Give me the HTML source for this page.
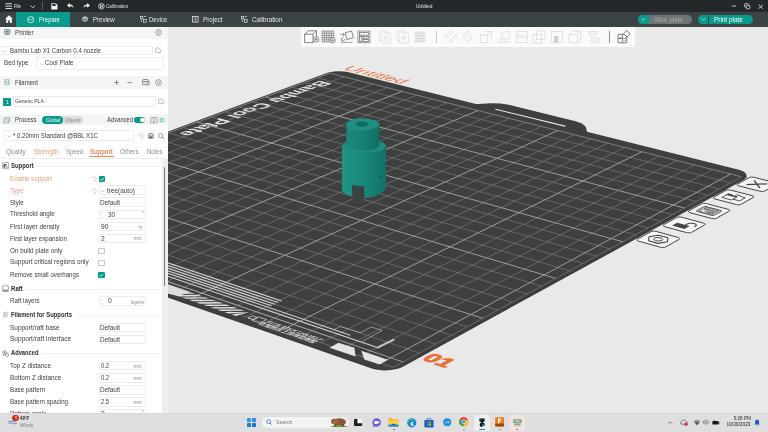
<!DOCTYPE html>
<html><head><meta charset="utf-8"><title>Untitled</title>
<style>
html,body{margin:0;padding:0;background:#e9e9e9;}
body{width:768px;height:432px;position:relative;overflow:hidden;font-family:"Liberation Sans",sans-serif;}
.a{position:absolute;box-sizing:border-box;}
.t{white-space:nowrap;}
svg{overflow:visible;}
</style></head><body>
<svg class="a" style="left:0;top:0" width="768" height="432" viewBox="0 0 768 432">
<defs><filter id="nolcd" x="-5%" y="-50%" width="110%" height="200%"><feOffset dx="0" dy="0"/></filter><linearGradient id="cyl" x1="0" x2="1" y1="0" y2="0"><stop offset="0" stop-color="#1f9585"/><stop offset="0.45" stop-color="#1a897b"/><stop offset="1" stop-color="#147166"/></linearGradient></defs>
<rect x="0" y="0" width="768" height="432" fill="#e9e9e9"/>
<polygon points="469.94,104.46 478.13,104.12 490.99,103.36 500.71,103.41 508.64,104.74 575.56,121.29 581.98,123.53 585.94,126.94 586.80,131.24 588.33,134.10" fill="#3e3f3f" stroke="none" stroke-width="0" />
<polygon points="-46.65,210.99 -49.37,212.17 -51.50,213.47 -52.98,214.84 -53.73,216.24 -53.72,217.61 -52.96,218.89 -51.46,220.03 -49.29,221.00 371.74,367.08 375.37,368.10 379.43,368.77 383.76,369.08 388.18,369.01 392.51,368.56 396.60,367.75 400.27,366.62 403.38,365.21 743.95,178.38 745.47,177.31 746.32,176.13 746.49,174.89 745.96,173.63 744.76,172.42 742.93,171.28 740.56,170.27 737.72,169.42 348.64,72.26 346.10,71.75 343.25,71.41 340.21,71.25 337.10,71.27 334.02,71.49 331.11,71.88 328.46,72.44 326.18,73.14" fill="#3a3b3b" stroke="none" stroke-width="0" transform="translate(0,1.3)"/>
<polygon points="-46.65,210.99 -49.37,212.17 -51.50,213.47 -52.98,214.84 -53.73,216.24 -53.72,217.61 -52.96,218.89 -51.46,220.03 -49.29,221.00 371.74,367.08 375.37,368.10 379.43,368.77 383.76,369.08 388.18,369.01 392.51,368.56 396.60,367.75 400.27,366.62 403.38,365.21 743.95,178.38 745.47,177.31 746.32,176.13 746.49,174.89 745.96,173.63 744.76,172.42 742.93,171.28 740.56,170.27 737.72,169.42 348.64,72.26 346.10,71.75 343.25,71.41 340.21,71.25 337.10,71.27 334.02,71.49 331.11,71.88 328.46,72.44 326.18,73.14" fill="#3e3f3f" stroke="none" stroke-width="0" />
<polygon points="-49.54,213.69 -50.24,214.09 -50.35,214.52 -49.85,214.87 390.81,366.73 392.06,366.96 393.42,366.88 394.53,366.51 740.47,177.42 740.78,177.06 740.51,176.67 739.74,176.36 331.13,73.54 330.26,73.42 329.29,73.46 328.49,73.64" fill="none" stroke="#858686" stroke-width="0.6" />
<path d="M329.72,73.18L741.57,176.82M329.72,73.18L-51.33,214.36M317.28,77.79L730.50,182.87M343.90,76.75L-36.47,219.48M304.67,82.47L719.26,189.02M358.21,80.35L-21.43,224.66M291.89,87.20L707.84,195.26M372.66,83.99L-6.22,229.90M278.93,92.00L696.25,201.59M387.25,87.66L9.18,235.21M252.49,101.80L672.51,214.57M416.87,95.11L40.52,246.01M238.99,106.80L660.36,221.21M431.90,98.90L56.48,251.51M225.30,111.87L648.01,227.96M447.09,102.72L72.63,257.08M211.42,117.01L635.47,234.82M462.42,106.57L88.97,262.71M183.06,127.52L609.75,248.87M493.56,114.41L122.28,274.19M168.58,132.88L596.57,256.08M509.36,118.39L139.24,280.03M153.89,138.33L583.17,263.40M525.33,122.41L156.41,285.95M138.98,143.85L569.55,270.85M541.47,126.47L173.80,291.94M108.50,155.14L541.60,286.13M574.24,134.71L209.25,304.16M92.92,160.91L527.26,293.97M590.89,138.90L227.32,310.39M77.11,166.77L512.67,301.94M607.71,143.13L245.62,316.70M61.05,172.72L497.82,310.06M624.70,147.41L264.16,323.08M28.20,184.89L467.32,326.73M659.25,156.10L301.97,336.12M11.39,191.12L451.66,335.29M676.80,160.52L321.26,342.76M-5.68,197.44L435.71,344.01M694.54,164.98L340.80,349.50M-23.01,203.87L419.47,352.88M712.47,169.50L360.60,356.32" stroke="#818282" stroke-width="0.6" fill="none"/>
<path d="M265.80,96.87L684.48,208.03M401.99,91.37L24.76,240.58M197.34,122.23L622.71,241.79M477.91,110.47L105.52,268.41M123.85,149.45L555.69,278.42M557.77,130.57L191.42,298.01M44.75,178.76L482.71,318.32M641.88,151.73L282.94,329.56M-40.63,210.39L402.92,361.93M730.60,174.06L380.67,363.24" stroke="#a6a7a7" stroke-width="0.9" fill="none"/>
<path d="M495.59,109.28L564.98,126.12" stroke="#e4e4e4" stroke-width="1.1" fill="none" stroke-linecap="round"/>
<path d="M75.56,231.96L281.58,300.95" stroke="#d2d2d2" stroke-width="1.15" fill="none" stroke-linecap="butt"/>
<path d="M72.11,233.35L278.22,302.56" stroke="#d2d2d2" stroke-width="1.15" fill="none" stroke-linecap="butt"/>
<path d="M68.65,234.73L274.85,304.18" stroke="#d2d2d2" stroke-width="1.15" fill="none" stroke-linecap="butt"/>
<path d="M65.17,236.13L271.47,305.80" stroke="#d2d2d2" stroke-width="1.15" fill="none" stroke-linecap="butt"/>
<path d="M61.86,237.46L350.49,335.20" stroke="#d2d2d2" stroke-width="1.1" fill="none" stroke-linecap="butt"/>
<path d="M58.01,239.00L377.28,347.46" stroke="#d2d2d2" stroke-width="1.1" fill="none" stroke-linecap="butt"/>
<path d="M51.51,241.61L331.82,337.35" stroke="#a8a8a8" stroke-width="0.45" fill="none" stroke-linecap="butt"/>
<path d="M377.01,347.95L394.36,339.43" stroke="#c6c6c6" stroke-width="2.0" fill="none" stroke-linecap="butt"/>
<polyline points="333.21,330.06 340.24,326.48 360.24,332.65 371.14,327.01 382.38,330.48 362.28,341.50" fill="none" stroke="#c4c4c4" stroke-width="0.6" />
<polygon points="112.93,265.27 190.45,292.10 177.84,296.00 168.35,293.70 100.91,270.37" fill="#dcdcdc" stroke="none" stroke-width="0" />
<polygon points="168.01,292.60 172.04,293.99 195.04,293.81 190.98,292.42" fill="#e0e0e0" stroke="none" stroke-width="0" />
<polygon points="174.94,294.99 178.98,296.39 202.03,296.21 197.96,294.81" fill="#e0e0e0" stroke="none" stroke-width="0" />
<polygon points="181.89,297.40 185.96,298.80 209.07,298.62 204.97,297.22" fill="#e0e0e0" stroke="none" stroke-width="0" />
<polygon points="188.88,299.81 192.97,301.23 216.13,301.04 212.01,299.63" fill="#e0e0e0" stroke="none" stroke-width="0" />
<polygon points="195.91,302.24 200.02,303.66 223.23,303.48 219.09,302.06" fill="#e0e0e0" stroke="none" stroke-width="0" />
<polygon points="202.97,304.68 207.10,306.11 230.37,305.92 226.21,304.50" fill="#e0e0e0" stroke="none" stroke-width="0" />
<polygon points="210.07,307.13 214.22,308.57 237.55,308.38 233.36,306.95" fill="#e0e0e0" stroke="none" stroke-width="0" />
<polygon points="217.20,309.60 221.37,311.04 244.76,310.85 240.55,309.41" fill="#e0e0e0" stroke="none" stroke-width="0" />
<polygon points="224.37,312.08 228.56,313.53 248.70,312.20 247.78,311.89" fill="#e0e0e0" stroke="none" stroke-width="0" />
<polygon points="231.58,314.57 235.79,316.02 248.70,312.20 248.70,312.20" fill="#e0e0e0" stroke="none" stroke-width="0" />
<polygon points="258.75,316.93 266.73,319.67 259.82,323.03 251.83,320.27" fill="none" stroke="#e0e0e0" stroke-width="0.7" stroke-linejoin="round"/>
<polygon points="252.56,315.80 257.54,317.51 253.04,319.68 248.05,317.96" fill="none" stroke="#e0e0e0" stroke-width="0.7" stroke-linejoin="round"/>
<polygon points="329.57,347.70 338.37,342.64 354.41,347.84 355.60,356.53" fill="#e4e4e4" stroke="none" stroke-width="0" />
<polygon points="361.25,350.77 387.82,359.73 379.62,364.53 364.38,359.57" fill="#e4e4e4" stroke="none" stroke-width="0" />
<text filter="url(#nolcd)" transform="matrix(1.8666,0.6424,-1.7293,0.8429,266.09,322.45)" x="0" y="0" text-anchor="start" font-family="'Liberation Sans',sans-serif" font-size="3.1" font-weight="700" fill="#e8e8e8" stroke="#e8e8e8" stroke-width="0" textLength="29" lengthAdjust="spacingAndGlyphs">GLUE STICK CAN HELP</text>
<text filter="url(#nolcd)" transform="matrix(1.8642,0.6443,-1.7389,0.8453,258.25,323.79)" x="0" y="0" text-anchor="start" font-family="'Noto Sans CJK SC',sans-serif" font-size="2.8" font-weight="700" fill="#e8e8e8" stroke="#e8e8e8" stroke-width="0" textLength="30" lengthAdjust="spacingAndGlyphs">在加热床上涂抹固体胶</text>
<text filter="url(#nolcd)" transform="matrix(-1.2893,0.4826,-1.4323,-0.3732,320.87,80.28)" x="0" y="0" text-anchor="start" font-family="'Liberation Sans',sans-serif" font-size="10.6" font-weight="700" fill="#e2e2e2" stroke="#e2e2e2" stroke-width="0" textLength="41.5" lengthAdjust="spacingAndGlyphs">Bambu</text>
<text filter="url(#nolcd)" transform="matrix(-1.3586,0.5085,-1.4448,-0.3926,261.99,102.21)" x="0" y="0" text-anchor="start" font-family="'Liberation Sans',sans-serif" font-size="10.6" font-weight="700" fill="#e2e2e2" stroke="#e2e2e2" stroke-width="0" textLength="26.5" lengthAdjust="spacingAndGlyphs">Cool</text>
<text filter="url(#nolcd)" transform="matrix(-1.4219,0.5322,-1.4548,-0.4104,220.41,117.70)" x="0" y="0" text-anchor="start" font-family="'Liberation Sans',sans-serif" font-size="10.6" font-weight="700" fill="#e2e2e2" stroke="#e2e2e2" stroke-width="0" textLength="30.0" lengthAdjust="spacingAndGlyphs">Plate</text>
<text filter="url(#nolcd)" transform="matrix(1.4354,0.3567,-1.2097,0.4604,341.87,69.21)" x="0" y="0" text-anchor="start" font-family="'Liberation Sans',sans-serif" font-size="11.0" font-weight="400" fill="#ea7444" stroke="#ea7444" stroke-width="0" textLength="41.5" lengthAdjust="spacingAndGlyphs">Untitled</text>
<text filter="url(#nolcd)" transform="matrix(2.0533,0.6915,-1.6321,0.9089,420.53,359.51)" x="0" y="0" text-anchor="start" font-family="'Liberation Sans',sans-serif" font-size="10.9" font-weight="700" fill="#ea6c36" stroke="#ea6c36" stroke-width="0.55" textLength="12.2" lengthAdjust="spacingAndGlyphs">01</text>
<polygon points="775.06,182.60 776.12,182.97 776.76,183.44 776.87,183.92 776.45,184.36 764.66,191.02 763.75,191.34 762.50,191.49 761.10,191.45 759.77,191.22 738.75,185.87 737.71,185.49 737.09,185.02 737.00,184.54 737.45,184.10 749.36,177.55 750.26,177.24 751.49,177.09 752.87,177.14 754.18,177.36" fill="#f4f4f4" stroke="#454545" stroke-width="1.0" stroke-linejoin="round"/>
<path d="M754.10,180.50L759.83,187.99" stroke="#454545" stroke-width="1.3" fill="none" stroke-linecap="butt"/>
<path d="M767.27,183.82L746.62,184.64" stroke="#454545" stroke-width="1.3" fill="none" stroke-linecap="butt"/>
<polygon points="752.00,195.60 753.06,195.98 753.70,196.46 753.80,196.96 753.35,197.41 741.18,204.29 740.25,204.62 738.97,204.78 737.55,204.73 736.20,204.50 714.99,198.98 713.94,198.59 713.33,198.11 713.25,197.60 713.72,197.15 726.02,190.39 726.94,190.07 728.20,189.92 729.60,189.96 730.92,190.19" fill="#f4f4f4" stroke="#454545" stroke-width="1.0" stroke-linejoin="round"/>
<polyline points="727.43,194.32 721.74,197.47 731.52,200.01 737.19,196.84 732.30,195.58 732.34,194.76 728.45,193.76 727.43,194.32" fill="none" stroke="#454545" stroke-width="0.9" />
<polygon points="728.45,193.76 732.34,194.76 732.30,195.58 737.19,196.84 735.95,197.54 726.18,195.01" fill="#454545" stroke="none" stroke-width="0" />
<polyline points="735.27,195.52 736.63,194.76 740.34,195.72 740.62,196.53 745.33,197.74 739.68,200.91 733.00,199.18" fill="none" stroke="#454545" stroke-width="0.9" />
<polygon points="727.82,209.22 728.90,209.61 729.53,210.11 729.62,210.63 729.15,211.09 716.57,218.21 715.61,218.55 714.30,218.71 712.86,218.67 711.49,218.42 690.09,212.72 689.03,212.32 688.42,211.82 688.36,211.30 688.85,210.83 701.56,203.84 702.51,203.51 703.79,203.35 705.21,203.40 706.55,203.63" fill="#f4f4f4" stroke="#454545" stroke-width="1.0" stroke-linejoin="round"/>
<polygon points="720.95,210.47 721.59,210.80 721.44,211.17 713.97,215.37 713.12,215.56 712.07,215.45 697.03,211.46 696.41,211.12 696.56,210.75 704.08,206.60 704.92,206.41 705.96,206.52" fill="none" stroke="#454545" stroke-width="0.9" />
<polygon points="705.58,207.37 719.00,210.91 717.37,211.83 703.94,208.28" fill="none" stroke="#454545" stroke-width="0.7" />
<polygon points="702.88,208.87 707.61,210.12 703.74,212.27 699.00,211.02" fill="none" stroke="#454545" stroke-width="0.7" />
<polygon points="709.39,210.58 716.32,212.42 714.80,213.27 707.87,211.43" fill="none" stroke="#454545" stroke-width="0.7" />
<polygon points="706.93,211.96 713.86,213.79 712.45,214.58 705.52,212.74" fill="none" stroke="#454545" stroke-width="0.7" />
<polygon points="703.31,223.03 704.39,223.44 705.01,223.96 705.09,224.49 704.60,224.97 691.59,232.33 690.60,232.68 689.27,232.85 687.80,232.80 686.42,232.55 664.83,226.66 663.76,226.24 663.16,225.73 663.11,225.19 663.62,224.71 676.76,217.48 677.74,217.14 679.05,216.98 680.49,217.03 681.84,217.27" fill="#f4f4f4" stroke="#454545" stroke-width="1.0" stroke-linejoin="round"/>
<polygon points="677.19,222.77 689.54,226.11 684.45,228.96 672.08,225.60" fill="#454545" stroke="none" stroke-width="0" />
<polyline points="685.55,225.03 687.73,223.82 687.73,223.82 689.46,223.29 691.80,223.19 694.12,223.55 695.80,224.26 696.38,225.15 695.72,225.97 694.27,226.79" fill="none" stroke="#454545" stroke-width="1.1" />
<polygon points="677.84,237.39 678.92,237.81 679.54,238.34 679.60,238.90 679.09,239.39 665.63,247.00 664.61,247.37 663.26,247.54 661.76,247.49 660.37,247.23 638.57,241.14 637.50,240.71 636.90,240.18 636.87,239.62 637.40,239.13 651.00,231.65 652.00,231.30 653.34,231.13 654.80,231.18 656.17,231.43" fill="#f4f4f4" stroke="#454545" stroke-width="1.0" stroke-linejoin="round"/>
<polygon points="667.53,241.83 657.89,243.35 648.62,240.76 649.02,236.70 658.61,235.21 667.85,237.76" fill="none" stroke="#454545" stroke-width="1.1" stroke-linejoin="round"/>
<polygon points="662.08,240.32 661.03,240.71 659.65,240.93 658.10,240.94 656.57,240.75 655.24,240.39 654.28,239.88 653.79,239.30 653.85,238.72 654.43,238.20 655.48,237.81 656.86,237.60 658.40,237.59 659.93,237.77 661.25,238.14 662.22,238.64 662.71,239.22 662.66,239.80" fill="none" stroke="#454545" stroke-width="1.0" />
<path d="M342.0,146.0 L342.0,190.0 C343.0,195.0 356.0,198.3 366.0,198.0 C377.0,197.2 385.5,192.0 386.0,187.0 L386.0,146.0 A22.0,6.7 0 0 0 342.0,146.0 Z" fill="url(#cyl)"/>
<path d="M352.2,197.6 L352.2,185.0 Q358,186.6 364.2,186.6 L364.2,199.5 L352.2,199.5 Z" fill="#3e3f3f"/>
<path d="M352.2,185.0 Q358,186.6 364.2,186.6" stroke="#11625a" stroke-width="0.8" fill="none"/>
<ellipse cx="364.0" cy="146.0" rx="22.0" ry="6.7" fill="#1c8d7f"/>
<path d="M346.40000000000003,124.0 L346.40000000000003,145.5 A16.4,5.8 0 0 0 379.2,145.5 L379.2,124.0 Z" fill="url(#cyl)"/>
<path d="M346.40000000000003,126.6 A16.4,5.8 0 0 0 379.2,126.6M346.40000000000003,128.7 A16.4,5.8 0 0 0 379.2,128.7M346.40000000000003,130.8 A16.4,5.8 0 0 0 379.2,130.8M346.40000000000003,132.9 A16.4,5.8 0 0 0 379.2,132.9M346.40000000000003,135.0 A16.4,5.8 0 0 0 379.2,135.0M346.40000000000003,137.1 A16.4,5.8 0 0 0 379.2,137.1M346.40000000000003,139.2 A16.4,5.8 0 0 0 379.2,139.2M346.40000000000003,141.3 A16.4,5.8 0 0 0 379.2,141.3M346.40000000000003,143.4 A16.4,5.8 0 0 0 379.2,143.4" stroke="#12695f" stroke-width="0.7" fill="none" opacity="0.75"/>
<ellipse cx="362.8" cy="124.0" rx="16.4" ry="5.8" fill="#1d9081"/>
<ellipse cx="362.0" cy="124.2" rx="6.0" ry="2.8" fill="#136a60"/>
<circle cx="381" cy="176.4" r="1.4" fill="#0f5a52"/>
</svg>
<div class="a" style="left:0px;top:0px;width:768px;height:12px;background:#23282b;"></div>
<svg class="a" style="left:5px;top:3px" width="8" height="7" viewBox="0 0 8 7"><path d="M0.4,0.7H7M0.4,3.1H7M0.4,5.5H7" stroke="#f2f2f2" stroke-width="0.9"/></svg>
<div class="a t" style="left:13.9px;top:0.10px;line-height:12px;font-size:5.7px;color:#f4f4f4;font-weight:400;transform:scaleX(0.751);transform-origin:left center;">File</div>
<svg class="a" style="left:29.5px;top:4.8px" width="6" height="4" viewBox="0 0 6 4"><path d="M0.5,0.6L2.8,2.7L5.1,0.6" stroke="#f2f2f2" stroke-width="0.8" fill="none"/></svg>
<div class="a" style="left:42.2px;top:2px;width:0.6px;height:8.4px;background:#565d60;"></div>
<svg class="a" style="left:51.4px;top:2.6px" width="7" height="7" viewBox="0 0 7 7"><path d="M0.3,0.3H4.8L6.5,2V6.5H0.3Z" fill="#f2f2f2"/><rect x="1.3" y="0.9" width="3.4" height="2.0" fill="#23282b"/><rect x="1.1" y="4.1" width="4.6" height="1.4" fill="#23282b" opacity="0.0"/></svg>
<svg class="a" style="left:67px;top:3.4px" width="7" height="5.4" viewBox="0 0 7 5.4"><path d="M2.9,0L0,2.4L2.9,4.8V3.3C4.6,3.2 5.8,3.8 6.6,5.2C6.4,3 5.2,1.7 2.9,1.5Z" fill="#f2f2f2"/></svg>
<svg class="a" style="left:82.8px;top:3.4px" width="7" height="5.4" viewBox="0 0 7 5.4"><path d="M4.1,0L7,2.4L4.1,4.8V3.3C2.4,3.2 1.2,3.8 0.4,5.2C0.6,3 1.8,1.7 4.1,1.5Z" fill="#f2f2f2"/></svg>
<svg class="a" style="left:98px;top:2.8px" width="7" height="7" viewBox="0 0 7 7"><circle cx="3.4" cy="3.3" r="2.8" fill="none" stroke="#e8e8e8" stroke-width="0.8"/><path d="M2.5,1.6V5M4.3,1.6V5M2.5,3.3H4.3" stroke="#e8e8e8" stroke-width="0.8"/></svg>
<div class="a t" style="left:106.4px;top:0.10px;line-height:12px;font-size:5.6px;color:#e2e2e2;font-weight:400;transform:scaleX(0.833);transform-origin:left center;">Calibration</div>
<div class="a t" style="left:415.8px;top:0.10px;line-height:12px;font-size:5.5px;color:#e8e8e8;font-weight:400;transform:scaleX(0.879);transform-origin:left center;">Untitled</div>
<svg class="a" style="left:731px;top:4px" width="6" height="4" viewBox="0 0 6 4"><path d="M0.8,2H5" stroke="#e0e0e0" stroke-width="0.8"/></svg>
<svg class="a" style="left:743.5px;top:2.8px" width="7" height="7" viewBox="0 0 7 7"><rect x="0.6" y="0.6" width="3.6" height="3.6" rx="0.8" fill="none" stroke="#e0e0e0" stroke-width="0.8"/><rect x="2.2" y="2.2" width="3.6" height="3.6" rx="0.8" fill="#23282b" stroke="#e0e0e0" stroke-width="0.8"/></svg>
<svg class="a" style="left:757.5px;top:3.6px" width="6" height="6" viewBox="0 0 6 6"><path d="M0.7,0.7L4.7,4.7M4.7,0.7L0.7,4.7" stroke="#e8e8e8" stroke-width="0.9"/></svg>
<div class="a" style="left:0px;top:12px;width:768px;height:14.5px;background:#3b4346;"></div>
<div class="a" style="left:16.1px;top:12px;width:54.4px;height:14.5px;background:#0a9a8b;"></div>
<svg class="a" style="left:4.5px;top:15.2px" width="8" height="8.5" viewBox="0 0 8 8.5"><path d="M4,0.2L0.2,3.7H1.2V8H3.1V5.4H4.9V8H6.8V3.7H7.8Z" fill="#ffffff"/></svg>
<svg class="a" style="left:27px;top:16px" width="8" height="8" viewBox="0 0 8 8"><circle cx="3.7" cy="3.7" r="3.1" fill="none" stroke="#dff5f1" stroke-width="0.8"/><path d="M1,2.6L3.7,4.2L6.4,2.6" stroke="#dff5f1" stroke-width="0.7" fill="none"/></svg>
<div class="a t" style="left:38.9px;top:13.60px;line-height:12px;font-size:6.7px;color:#f0fbf9;font-weight:400;transform:scaleX(0.877);transform-origin:left center;">Prepare</div>
<svg class="a" style="left:82px;top:16.4px" width="7" height="7" viewBox="0 0 7 7"><path d="M3,0.3L5.7,1.6V4.6L3,6L0.3,4.6V1.6Z" fill="#c9cdce"/><path d="M1.2,2.6H4.8M1.2,3.6H4.8M1.2,4.5H4.8" stroke="#3b4346" stroke-width="0.45"/></svg>
<div class="a t" style="left:92.8px;top:13.60px;line-height:12px;font-size:6.7px;color:#e4e6e6;font-weight:400;transform:scaleX(0.906);transform-origin:left center;">Preview</div>
<svg class="a" style="left:140.3px;top:16.2px" width="7" height="7" viewBox="0 0 7 7"><rect x="0.4" y="0.4" width="2.4" height="2.4" fill="none" stroke="#e0e2e2" stroke-width="0.7"/><rect x="3.6" y="3.4" width="2.6" height="2.8" fill="none" stroke="#e0e2e2" stroke-width="0.7"/><path d="M4,0.6H6M1.4,3.6V6" stroke="#e0e2e2" stroke-width="0.7"/></svg>
<div class="a t" style="left:148.8px;top:13.60px;line-height:12px;font-size:6.7px;color:#e4e6e6;font-weight:400;transform:scaleX(0.894);transform-origin:left center;">Device</div>
<svg class="a" style="left:192.2px;top:16.3px" width="7" height="7" viewBox="0 0 7 7"><rect x="0.5" y="0.5" width="5.6" height="5.6" fill="none" stroke="#e0e2e2" stroke-width="0.8"/><path d="M3.3,0.5V6.1M1.6,2.3H2.4M4.2,2.3H5M1.6,4H2.4M4.2,4H5" stroke="#e0e2e2" stroke-width="0.6"/></svg>
<div class="a t" style="left:202.6px;top:13.60px;line-height:12px;font-size:6.7px;color:#e4e6e6;font-weight:400;transform:scaleX(0.940);transform-origin:left center;">Project</div>
<svg class="a" style="left:240.6px;top:16.2px" width="7" height="7" viewBox="0 0 7 7"><rect x="0.4" y="0.4" width="2.4" height="2.4" fill="none" stroke="#e0e2e2" stroke-width="0.7"/><rect x="3.6" y="3.4" width="2.6" height="2.8" fill="none" stroke="#e0e2e2" stroke-width="0.7"/><path d="M4,0.6H6M1.4,3.6V6" stroke="#e0e2e2" stroke-width="0.7"/></svg>
<div class="a t" style="left:251.6px;top:13.60px;line-height:12px;font-size:6.7px;color:#e4e6e6;font-weight:400;transform:scaleX(0.952);transform-origin:left center;">Calibration</div>
<div class="a" style="left:637.6px;top:15px;width:54.2px;height:9px;background:#6f7373;border-radius:4.5px;"></div>
<div class="a" style="left:637.6px;top:15px;width:11px;height:9px;background:#0a9a8b;border-radius:4.5px 0 0 4.5px;"></div>
<svg class="a" style="left:640.8px;top:18px" width="5" height="3" viewBox="0 0 5 3"><path d="M0.5,0.5L2.3,2.1L4.1,0.5" stroke="#e8f6f4" stroke-width="0.7" fill="none"/></svg>
<div class="a t" style="left:654.4px;top:13.60px;line-height:12px;font-size:6.5px;color:#a9adad;font-weight:400;transform:scaleX(0.954);transform-origin:left center;">Slice plate</div>
<div class="a" style="left:698px;top:15px;width:54.6px;height:9px;background:#0a9a8b;border-radius:4.5px;"></div>
<div class="a" style="left:708.4px;top:15px;width:0.6px;height:9px;background:#3b4346;"></div>
<svg class="a" style="left:701px;top:18px" width="5" height="3" viewBox="0 0 5 3"><path d="M0.5,0.5L2.3,2.1L4.1,0.5" stroke="#e8f6f4" stroke-width="0.7" fill="none"/></svg>
<div class="a t" style="left:714.4px;top:13.60px;line-height:12px;font-size:6.5px;color:#ffffff;font-weight:400;transform:scaleX(0.984);transform-origin:left center;">Print plate</div>
<div class="a" style="left:301.3px;top:26.5px;width:334px;height:20.3px;background:#fafafa;"></div>
<svg class="a" style="left:303.6px;top:29.6px" width="14" height="14" viewBox="0 0 14 14"><path d="M0.6,4.2L4.4,0.8H12.4V8.6L9,12.6H0.6ZM0.6,4.2H9V12.6M9,4.2L12.4,0.8" fill="none" stroke="#4a4a4a" stroke-width="0.65" stroke-linejoin="round"/><circle cx="12.2" cy="9.4" r="2.6" fill="#fafafa" stroke="#4a4a4a" stroke-width="0.6"/><path d="M10.799999999999999,9.4H13.6M12.2,8.0V10.8" stroke="#4a4a4a" stroke-width="0.6"/></svg>
<svg class="a" style="left:321.2px;top:29.6px" width="14" height="14" viewBox="0 0 14 14"><path d="M1.00,1V12M1,1.00H12.8M3.35,1V12M1,3.20H12.8M5.70,1V12M1,5.40H12.8M8.05,1V12M1,7.60H12.8M10.40,1V12M1,9.80H12.8M12.75,1V12M1,12.00H12.8" stroke="#4a4a4a" stroke-width="0.5" fill="none"/><circle cx="11.7" cy="10.4" r="2.6" fill="#fafafa" stroke="#4a4a4a" stroke-width="0.6"/><path d="M10.299999999999999,10.4H13.1M11.7,9.0V11.8" stroke="#4a4a4a" stroke-width="0.6"/></svg>
<svg class="a" style="left:340px;top:29.6px" width="14" height="14" viewBox="0 0 14 14"><path d="M5.2,2.8L11.6,1L13.4,7.6L7,9.6Z" fill="none" stroke="#4a4a4a" stroke-width="0.65" stroke-linejoin="round"/><path d="M0.6,4.4H4.2M3,3.2L4.4,4.4L3,5.6M1.4,8.8L3.8,6.6M1.4,8.8L1.6,11H3.6L5,9" fill="none" stroke="#4a4a4a" stroke-width="0.6"/><path d="M1.6,12.4H12.6" stroke="#8a8a8a" stroke-width="0.8"/></svg>
<svg class="a" style="left:357.3px;top:29.6px" width="14" height="14" viewBox="0 0 14 14"><rect x="0.9" y="1.1" width="12" height="11.6" fill="none" stroke="#8c8c8c" stroke-width="0.9"/><rect x="2.4" y="2.7" width="9" height="2.4" fill="none" stroke="#4a4a4a" stroke-width="0.6"/><rect x="2.4" y="6.3" width="2.4" height="5" fill="none" stroke="#4a4a4a" stroke-width="0.6"/><rect x="6" y="6.3" width="5.4" height="1.9" fill="none" stroke="#4a4a4a" stroke-width="0.6"/><rect x="6" y="9.4" width="5.4" height="1.9" fill="none" stroke="#4a4a4a" stroke-width="0.6"/></svg>
<svg class="a" style="left:378px;top:29.6px" width="14" height="14" viewBox="0 0 14 14"><rect x="1" y="1" width="8.6" height="9.6" rx="1" fill="none" stroke="#d4d4d4" stroke-width="0.6"/><rect x="3.4" y="3" width="9.4" height="10" rx="1" fill="#fafafa" stroke="#d4d4d4" stroke-width="0.6"/><text x="8.1" y="10.6" text-anchor="middle" font-family="Liberation Sans,sans-serif" font-size="7.4" fill="#d4d4d4">0</text></svg>
<svg class="a" style="left:395.6px;top:29.6px" width="14" height="14" viewBox="0 0 14 14"><rect x="1" y="1" width="8.6" height="9.6" rx="1" fill="none" stroke="#d4d4d4" stroke-width="0.6"/><rect x="3.4" y="3" width="9.4" height="10" rx="1" fill="#fafafa" stroke="#d4d4d4" stroke-width="0.6"/><text x="8.1" y="10.6" text-anchor="middle" font-family="Liberation Sans,sans-serif" font-size="7.4" fill="#d4d4d4">P</text></svg>
<svg class="a" style="left:413.2px;top:29.6px" width="14" height="14" viewBox="0 0 14 14"><path d="M1.6,2.2H12.4M1.6,3.8H12.4M1.6,5.4H12.4M1.6,7H12.4M1.6,8.6H12.4M1.6,10.2H12.4M1.6,11.8H12.4" stroke="#d4d4d4" stroke-width="0.9"/></svg>
<div class="a" style="left:435.7px;top:30.6px;width:0.7px;height:12px;background:#c9c9c9;"></div>
<svg class="a" style="left:443.8px;top:29.6px" width="14" height="14" viewBox="0 0 14 14"><path d="M7,0.8L8.8,2.8L7,4.8L5.2,2.8ZM7,9L8.8,11L7,13L5.2,11ZM0.9,6.9L2.9,5.1L4.9,6.9L2.9,8.7ZM9.1,6.9L11.1,5.1L13.1,6.9L11.1,8.7Z" fill="none" stroke="#d4d4d4" stroke-width="0.6"/></svg>
<svg class="a" style="left:461px;top:29.6px" width="14" height="14" viewBox="0 0 14 14"><path d="M6.4,3.6L11,7.6L6.8,12L2,7.8Z" fill="none" stroke="#d4d4d4" stroke-width="0.65"/><path d="M2.4,5.4Q3.6,1.4 8.4,1.6M7,0.4L8.6,1.6L7.2,3" fill="none" stroke="#d4d4d4" stroke-width="0.6"/></svg>
<svg class="a" style="left:479px;top:29.6px" width="14" height="14" viewBox="0 0 14 14"><rect x="1.2" y="5" width="7.6" height="7.6" fill="none" stroke="#d4d4d4" stroke-width="0.65"/><path d="M5,1.4H12.6V9M8.6,5.4L12.2,1.8M10,1.6H12.4V4" fill="none" stroke="#d4d4d4" stroke-width="0.6"/></svg>
<svg class="a" style="left:497.4px;top:29.6px" width="14" height="14" viewBox="0 0 14 14"><path d="M4.6,2.4L12,1L13,8.4L5.8,9.8Z" fill="none" stroke="#d4d4d4" stroke-width="0.65"/><path d="M1,12.2H12.6M1.4,10.4L4.4,8.4" stroke="#d4d4d4" stroke-width="0.8" fill="none"/></svg>
<svg class="a" style="left:514.6px;top:29.6px" width="14" height="14" viewBox="0 0 14 14"><rect x="1.4" y="1.2" width="11" height="4.8" fill="none" stroke="#d4d4d4" stroke-width="0.65"/><rect x="1.4" y="7.8" width="11" height="4.8" fill="none" stroke="#d4d4d4" stroke-width="0.65"/></svg>
<svg class="a" style="left:531.6px;top:29.6px" width="14" height="14" viewBox="0 0 14 14"><rect x="4.6" y="1" width="8.4" height="8.4" fill="none" stroke="#d4d4d4" stroke-width="0.65"/><rect x="1" y="4.6" width="8.4" height="8.4" fill="none" stroke="#d4d4d4" stroke-width="0.65"/></svg>
<svg class="a" style="left:549.8px;top:29.6px" width="14" height="14" viewBox="0 0 14 14"><rect x="1.4" y="1.4" width="11.2" height="11.2" fill="none" stroke="#d4d4d4" stroke-width="0.65"/><rect x="4" y="6" width="4.4" height="6.4" fill="#cfcfcf"/></svg>
<svg class="a" style="left:568.4px;top:29.6px" width="14" height="14" viewBox="0 0 14 14"><path d="M1,4.6L4.6,1.2H13V9L9.6,12.8H1ZM1,4.6H9.6V12.8M9.6,4.6L13,1.2" fill="none" stroke="#d4d4d4" stroke-width="0.65" stroke-linejoin="round"/></svg>
<svg class="a" style="left:587.2px;top:29.6px" width="14" height="14" viewBox="0 0 14 14"><path d="M1.6,1.6H10.4V3.6H7.2V12.4H4.8V3.6H1.6Z" fill="none" stroke="#d4d4d4" stroke-width="0.65"/><rect x="9.4" y="8.6" width="3.4" height="3.8" fill="none" stroke="#d4d4d4" stroke-width="0.6"/></svg>
<div class="a" style="left:609.3px;top:30.6px;width:0.7px;height:12px;background:#8f8f8f;"></div>
<svg class="a" style="left:617px;top:29.6px" width="14" height="14" viewBox="0 0 14 14"><rect x="1" y="4.4" width="8.8" height="8.4" rx="0.8" fill="none" stroke="#4a4a4a" stroke-width="0.7"/><path d="M5.4,4.4V12.8M1,8.6H9.8" stroke="#4a4a4a" stroke-width="0.6"/><path d="M6.6,3.6L9.6,0.6L13.2,3.8L10,7Z" fill="#fafafa" stroke="#4a4a4a" stroke-width="0.7" stroke-linejoin="round"/><path d="M2.4,7L3.2,8.2L4.4,6.6M6.6,10L7.6,11.2L8.6,9.8" stroke="#4a4a4a" stroke-width="0.5" fill="none"/></svg>
<div class="a" style="left:0px;top:26.5px;width:168px;height:386.1px;background:#ffffff;"></div>
<div class="a" style="left:162px;top:158px;width:6px;height:254.6px;background:#efefef;"></div>
<div class="a" style="left:0px;top:26.5px;width:168px;height:12.1px;background:#f5f5f5;"></div>
<svg class="a" style="left:3.6px;top:29.4px" width="7" height="6" viewBox="0 0 7 6"><rect x="0.5" y="0.6" width="5.4" height="4.2" rx="0.6" fill="none" stroke="#5c5c5c" stroke-width="0.7"/><rect x="1.7" y="1.7" width="3" height="1.9" fill="#0a9a8b"/><path d="M1.2,5.5H5.2" stroke="#5c5c5c" stroke-width="0.6"/></svg>
<div class="a t" style="left:14.7px;top:26.50px;line-height:12px;font-size:6.7px;color:#3d3d3d;font-weight:400;transform:scaleX(0.943);transform-origin:left center;">Printer</div>
<svg class="a" style="left:154.9px;top:29.0px" width="7" height="7" viewBox="0 0 7 7"><polygon points="6.60,3.50 5.05,6.18 1.95,6.18 0.40,3.50 1.95,0.82 5.05,0.82" fill="none" stroke="#7a7a7a" stroke-width="0.65" stroke-linejoin="round"/><circle cx="3.5" cy="3.5" r="1.15" fill="none" stroke="#7a7a7a" stroke-width="0.6"/></svg>
<div class="a" style="left:1.2px;top:45.6px;width:152.2px;height:9.8px;background:#ffffff;border:1px solid #ececec;border-radius:1.2px;"></div>
<svg class="a" style="left:3.4px;top:49.6px" width="4" height="3" viewBox="0 0 4 3"><path d="M0.4,0.5L1.9,2L3.4,0.5" stroke="#9a9a9a" stroke-width="0.55" fill="none"/></svg>
<div class="a t" style="left:10px;top:44.60px;line-height:12px;font-size:6.6px;color:#3d3d3d;font-weight:400;transform:scaleX(0.919);transform-origin:left center;">Bambu Lab X1 Carbon 0.4 nozzle</div>
<svg class="a" style="left:155.0px;top:47.0px" width="6.4" height="6.4" viewBox="0 0 6.4 6.4"><path d="M3.4,0.9H1.4Q0.7,0.9 0.7,1.6V4.9Q0.7,5.6 1.4,5.6H4.7Q5.4,5.6 5.4,4.9V3" fill="none" stroke="#8c8c8c" stroke-width="0.6"/><path d="M2.9,3.4L5.6,0.7" stroke="#8c8c8c" stroke-width="0.6"/></svg>
<div class="a t" style="left:4px;top:57.40px;line-height:12px;font-size:6.6px;color:#3d3d3d;font-weight:400;transform:scaleX(0.944);transform-origin:left center;">Bed type</div>
<div class="a" style="left:36.2px;top:57.3px;width:127.9px;height:12.3px;background:#ffffff;border:1px solid #ececec;border-radius:1.2px;"></div>
<svg class="a" style="left:39.6px;top:62.6px" width="4" height="3" viewBox="0 0 4 3"><path d="M0.4,0.5L1.9,2L3.4,0.5" stroke="#9a9a9a" stroke-width="0.55" fill="none"/></svg>
<div class="a t" style="left:45.2px;top:57.40px;line-height:12px;font-size:6.6px;color:#3d3d3d;font-weight:400;transform:scaleX(0.939);transform-origin:left center;">Cool Plate</div>
<div class="a" style="left:0px;top:76.3px;width:168px;height:12.4px;background:#f5f5f5;"></div>
<svg class="a" style="left:3.8px;top:79.2px" width="7" height="6.4" viewBox="0 0 7 6.4"><rect x="0.5" y="0.5" width="5.2" height="5.2" rx="1" fill="none" stroke="#7fbfb6" stroke-width="0.6"/><path d="M1.8,0.6V5.6M4.4,0.6V5.6M1.8,3.1H4.4" stroke="#8a8a8a" stroke-width="0.55"/></svg>
<div class="a t" style="left:14.7px;top:76.50px;line-height:12px;font-size:6.7px;color:#3d3d3d;font-weight:400;transform:scaleX(0.895);transform-origin:left center;">Filament</div>
<svg class="a" style="left:114px;top:79.8px" width="5.4" height="5.4" viewBox="0 0 5.4 5.4"><path d="M2.6,0.3V4.9M0.3,2.6H4.9" stroke="#4a4a4a" stroke-width="0.6"/></svg>
<svg class="a" style="left:126.8px;top:79.8px" width="5.4" height="5.4" viewBox="0 0 5.4 5.4"><path d="M0.3,2.6H4.9" stroke="#4a4a4a" stroke-width="0.6"/></svg>
<svg class="a" style="left:142px;top:79.2px" width="8.4" height="6.6" viewBox="0 0 8.4 6.6"><path d="M0.5,2.2L1.3,0.5H6.1L6.9,2.2V5.6H0.5Z" fill="none" stroke="#5a5a5a" stroke-width="0.65"/><path d="M0.5,2.4H6.9M2.6,2.4V3.6M4.8,2.4V3.6" stroke="#5a5a5a" stroke-width="0.6"/><circle cx="6" cy="4.9" r="1.3" fill="#f5f5f5" stroke="#5a5a5a" stroke-width="0.5"/></svg>
<svg class="a" style="left:155.3px;top:79.0px" width="7" height="7" viewBox="0 0 7 7"><polygon points="6.60,3.50 5.05,6.18 1.95,6.18 0.40,3.50 1.95,0.82 5.05,0.82" fill="none" stroke="#7a7a7a" stroke-width="0.65" stroke-linejoin="round"/><circle cx="3.5" cy="3.5" r="1.15" fill="none" stroke="#7a7a7a" stroke-width="0.6"/></svg>
<div class="a" style="left:3.1px;top:97.7px;width:7.9px;height:7.9px;background:#0a9a8b;border-radius:0.6px;"></div>
<div class="a t" style="left:5.9px;top:95.70px;line-height:12px;font-size:5.2px;color:#e8f6f4;font-weight:400;transform:scaleX(0.999);">1</div>
<div class="a" style="left:13.1px;top:96.2px;width:143.2px;height:10.4px;background:#ffffff;border:1px solid #ececec;border-radius:1.2px;"></div>
<div class="a t" style="left:15.1px;top:95.40px;line-height:12px;font-size:5.6px;color:#3d3d3d;font-weight:400;transform:scaleX(0.907);transform-origin:left center;">Generic PLA</div>
<svg class="a" style="left:158.3px;top:98.1px" width="6.4" height="6.4" viewBox="0 0 6.4 6.4"><path d="M3.4,0.9H1.4Q0.7,0.9 0.7,1.6V4.9Q0.7,5.6 1.4,5.6H4.7Q5.4,5.6 5.4,4.9V3" fill="none" stroke="#8c8c8c" stroke-width="0.6"/><path d="M2.9,3.4L5.6,0.7" stroke="#8c8c8c" stroke-width="0.6"/></svg>
<div class="a" style="left:0px;top:113.7px;width:168px;height:11.8px;background:#f5f5f5;"></div>
<svg class="a" style="left:3.4px;top:116.5px" width="8" height="6.6" viewBox="0 0 8 6.6"><path d="M1.6,0.6H6.8V4.4H1.6Z" fill="none" stroke="#8a8a8a" stroke-width="0.6"/><path d="M0.5,2.1H5.7V5.9H0.5Z" fill="#f5f5f5" stroke="#5cab9f" stroke-width="0.6"/><path d="M0.5,4.2H5.7" stroke="#8a8a8a" stroke-width="0.5"/></svg>
<div class="a t" style="left:15.4px;top:113.70px;line-height:12px;font-size:6.7px;color:#3d3d3d;font-weight:400;transform:scaleX(0.892);transform-origin:left center;">Process</div>
<div class="a" style="left:41.9px;top:115.6px;width:41.2px;height:8.3px;background:#dcdcdc;border-radius:4.2px;"></div>
<div class="a" style="left:41.9px;top:115.6px;width:21.2px;height:8.3px;background:#0a9a8b;border-radius:4.2px;"></div>
<div class="a t" style="left:45.6px;top:113.80px;line-height:12px;font-size:5.3px;color:#e6f7f5;font-weight:400;transform:scaleX(0.927);transform-origin:left center;">Global</div>
<div class="a t" style="left:65.0px;top:113.80px;line-height:12px;font-size:5.3px;color:#8a8a8a;font-weight:400;transform:scaleX(0.868);transform-origin:left center;">Objects</div>
<div class="a t" style="left:106.9px;top:113.70px;line-height:12px;font-size:6.7px;color:#3d3d3d;font-weight:400;transform:scaleX(0.879);transform-origin:left center;">Advanced</div>
<div class="a" style="left:134.4px;top:116.9px;width:11px;height:5.9px;background:#0a9a8b;border-radius:3px;"></div>
<div class="a" style="left:140.2px;top:117.5px;width:4.7px;height:4.7px;background:#ffffff;border-radius:2.4px;"></div>
<svg class="a" style="left:150px;top:116.6px" width="8.2" height="6.6" viewBox="0 0 8.2 6.6"><rect x="0.5" y="0.5" width="6.8" height="5.4" rx="0.8" fill="#e8e8e8" stroke="#8a8a8a" stroke-width="0.6"/><path d="M3.9,0.5V5.9" stroke="#8a8a8a" stroke-width="0.6"/></svg>
<svg class="a" style="left:159px;top:116.8px" width="6" height="6.4" viewBox="0 0 6 6.4"><path d="M1.2,0.8V5.4M1.2,1.8H3.4M1.2,4.4H3.4" stroke="#35b3a4" stroke-width="0.6" fill="none"/><circle cx="4.2" cy="1.8" r="0.9" fill="none" stroke="#35b3a4" stroke-width="0.5"/><circle cx="4.2" cy="4.4" r="0.9" fill="none" stroke="#35b3a4" stroke-width="0.5"/></svg>
<div class="a" style="left:3.8px;top:130.1px;width:130.6px;height:11.3px;background:#ffffff;border:1px solid #ececec;border-radius:1.2px;"></div>
<svg class="a" style="left:7.2px;top:134.9px" width="4" height="3" viewBox="0 0 4 3"><path d="M0.4,0.5L1.9,2L3.4,0.5" stroke="#9a9a9a" stroke-width="0.55" fill="none"/></svg>
<div class="a t" style="left:13.1px;top:130.10px;line-height:12px;font-size:6.9px;color:#3d3d3d;font-weight:400;transform:scaleX(0.881);transform-origin:left center;">* 0.20mm Standard @BBL X1C</div>
<svg class="a" style="left:138.2px;top:133px" width="6" height="6" viewBox="0 0 6 6"><path d="M0.8,3.3A2.2,2.2 0 1 1 3,5.2" fill="none" stroke="#eea98a" stroke-width="0.6"/><path d="M3.9,5.9L2.9,5.2L3.8,4.3" fill="none" stroke="#eea98a" stroke-width="0.55"/></svg>
<svg class="a" style="left:148.3px;top:133.2px" width="6.4" height="6" viewBox="0 0 6.4 6"><path d="M0.5,1.4L1.2,0.5H4.6L5.3,1.4V5.2H0.5Z" fill="none" stroke="#5a5a5a" stroke-width="0.65"/><path d="M0.5,2.2H5.3" stroke="#5a5a5a" stroke-width="0.6"/><rect x="1.4" y="3.3" width="3" height="1.9" fill="#5a5a5a"/></svg>
<svg class="a" style="left:157.6px;top:133px" width="7" height="7" viewBox="0 0 7 7"><circle cx="2.7" cy="2.7" r="2.1" fill="none" stroke="#6a6a6a" stroke-width="0.65"/><path d="M4.3,4.3L6.2,6.2" stroke="#6a6a6a" stroke-width="0.7"/></svg>
<div class="a t" style="left:6.2px;top:146.10px;line-height:12px;font-size:6.7px;color:#8d8d8d;font-weight:400;transform:scaleX(0.950);transform-origin:left center;">Quality</div>
<div class="a t" style="left:33.7px;top:146.10px;line-height:12px;font-size:6.7px;color:#e79c74;font-weight:400;transform:scaleX(0.963);transform-origin:left center;">Strength</div>
<div class="a t" style="left:65.6px;top:146.10px;line-height:12px;font-size:6.7px;color:#8d8d8d;font-weight:400;transform:scaleX(0.888);transform-origin:left center;">Speed</div>
<div class="a t" style="left:90px;top:146.10px;line-height:12px;font-size:6.7px;color:#e8895f;font-weight:700;transform:scaleX(0.888);transform-origin:left center;">Support</div>
<div class="a t" style="left:120px;top:146.10px;line-height:12px;font-size:6.7px;color:#8d8d8d;font-weight:400;transform:scaleX(0.920);transform-origin:left center;">Others</div>
<div class="a t" style="left:146.9px;top:146.10px;line-height:12px;font-size:6.7px;color:#8d8d8d;font-weight:400;transform:scaleX(0.891);transform-origin:left center;">Notes</div>
<div class="a" style="left:89px;top:156.3px;width:24.8px;height:0.9px;background:#e8895f;"></div>
<div class="a" style="left:0px;top:157.7px;width:162px;height:0.5px;background:#ededed;"></div>
<div class="a" style="left:163.9px;top:167px;width:1.6px;height:119px;background:#7a7a7a;border-radius:0.8px;"></div>
<svg class="a" style="left:2px;top:162.4px" width="8" height="7.2" viewBox="0 0 8 7.2"><rect x="0.5" y="0.5" width="6.2" height="6.2" rx="0.7" fill="none" stroke="#7a7a7a" stroke-width="0.6"/><path d="M1.6,2H4.4V3.4H3.2V5.8H1.6Z" fill="#4a4a4a"/><path d="M4.2,4.6H5.8V5.8H4.2Z" fill="#8a8a8a"/></svg>
<div class="a t" style="left:11.3px;top:160.00px;line-height:12px;font-size:6.7px;color:#2e2e2e;font-weight:700;transform:scaleX(0.888);transform-origin:left center;">Support</div>
<div class="a" style="left:37.1px;top:166px;width:122.9px;height:0.5px;background:#f2f2f2;"></div>
<div class="a t" style="left:10px;top:172.75px;line-height:12px;font-size:6.6px;color:#e79c74;font-weight:400;transform:scaleX(0.944);transform-origin:left center;">Enable support</div>
<svg class="a" style="left:90.7px;top:175.8px" width="6" height="6" viewBox="0 0 6 6"><path d="M0.8,3.3A2.2,2.2 0 1 1 3,5.2" fill="none" stroke="#eea98a" stroke-width="0.6"/><path d="M3.9,5.9L2.9,5.2L3.8,4.3" fill="none" stroke="#eea98a" stroke-width="0.55"/></svg>
<div class="a" style="left:98.5px;top:175.6px;width:6.3px;height:6.4px;background:#0a9a8b;border-radius:0.9px;"></div>
<svg class="a" style="left:98.5px;top:175.6px" width="6.3" height="6.4" viewBox="0 0 6.3 6.4"><path d="M1.5,3.2L2.7,4.5L4.9,2" fill="none" stroke="#ffffff" stroke-width="0.75"/></svg>
<div class="a t" style="left:10px;top:184.60px;line-height:12px;font-size:6.6px;color:#e79c8a;font-weight:400;transform:scaleX(0.957);transform-origin:left center;">Type</div>
<svg class="a" style="left:90.7px;top:187.6px" width="6" height="6" viewBox="0 0 6 6"><path d="M0.8,3.3A2.2,2.2 0 1 1 3,5.2" fill="none" stroke="#eea98a" stroke-width="0.6"/><path d="M3.9,5.9L2.9,5.2L3.8,4.3" fill="none" stroke="#eea98a" stroke-width="0.55"/></svg>
<div class="a" style="left:98.6px;top:185.4px;width:47px;height:9.8px;background:#ffffff;border:1px solid #ececec;border-radius:1.2px;"></div>
<svg class="a" style="left:101.4px;top:189.5px" width="4" height="3" viewBox="0 0 4 3"><path d="M0.4,0.5L1.9,2L3.4,0.5" stroke="#9a9a9a" stroke-width="0.55" fill="none"/></svg>
<div class="a t" style="left:106.5px;top:184.70px;line-height:12px;font-size:6.8px;color:#3d3d3d;font-weight:400;transform:scaleX(0.946);transform-origin:left center;">tree(auto)</div>
<div class="a t" style="left:10px;top:196.75px;line-height:12px;font-size:6.6px;color:#3d3d3d;font-weight:400;transform:scaleX(0.934);transform-origin:left center;">Style</div>
<div class="a" style="left:98.6px;top:197.4px;width:47px;height:9.8px;background:#ffffff;border:1px solid #ececec;border-radius:1.2px;"></div>
<div class="a t" style="left:100px;top:196.80px;line-height:12px;font-size:6.8px;color:#3d3d3d;font-weight:400;transform:scaleX(0.928);transform-origin:left center;">Default</div>
<div class="a t" style="left:10px;top:208.40px;line-height:12px;font-size:6.6px;color:#3d3d3d;font-weight:400;transform:scaleX(0.944);transform-origin:left center;">Threshold angle</div>
<div class="a" style="left:98.6px;top:209.5px;width:47px;height:9.8px;background:#ffffff;border:1px solid #ececec;border-radius:1.2px;"></div>
<svg class="a" style="left:100.3px;top:210.8px" width="3.4" height="7.2" viewBox="0 0 3.4 7.2"><path d="M0.5,2.5Q1.7,0.3 2.9,2.5M0.5,4.7Q1.7,6.9 2.9,4.7" fill="none" stroke="#c4c4c4" stroke-width="0.5"/></svg>
<div class="a t" style="left:107.7px;top:208.50px;line-height:12px;font-size:6.8px;color:#3d3d3d;font-weight:400;transform:scaleX(0.925);transform-origin:left center;">30</div>
<div class="a t" style="left:142.2px;top:206.80px;line-height:12px;font-size:5px;color:#8d8d8d;font-weight:400;transform:scaleX(0.999);">°</div>
<div class="a t" style="left:10px;top:220.75px;line-height:12px;font-size:6.6px;color:#3d3d3d;font-weight:400;transform:scaleX(0.955);transform-origin:left center;">First layer density</div>
<div class="a" style="left:98.6px;top:221.6px;width:47px;height:9.8px;background:#ffffff;border:1px solid #ececec;border-radius:1.2px;"></div>
<div class="a t" style="left:100.6px;top:220.80px;line-height:12px;font-size:6.8px;color:#3d3d3d;font-weight:400;transform:scaleX(0.978);transform-origin:left center;">90</div>
<div class="a t" style="right:626px;top:221.10px;line-height:12px;font-size:5px;color:#8d8d8d;font-weight:400;transform:scaleX(0.877);transform-origin:right center;">%</div>
<div class="a t" style="left:10px;top:232.60px;line-height:12px;font-size:6.6px;color:#3d3d3d;font-weight:400;transform:scaleX(0.934);transform-origin:left center;">First layer expansion</div>
<div class="a" style="left:98.6px;top:233.7px;width:47px;height:9.8px;background:#ffffff;border:1px solid #ececec;border-radius:1.2px;"></div>
<div class="a t" style="left:100.6px;top:232.70px;line-height:12px;font-size:6.8px;color:#3d3d3d;font-weight:400;transform:scaleX(0.999);">2</div>
<div class="a t" style="right:626px;top:233.40px;line-height:12px;font-size:4.6px;color:#8d8d8d;font-weight:400;transform:scaleX(1.057);transform-origin:right center;">mm</div>
<div class="a t" style="left:10px;top:244.75px;line-height:12px;font-size:6.6px;color:#3d3d3d;font-weight:400;transform:scaleX(0.960);transform-origin:left center;">On build plate only</div>
<div class="a" style="left:98.4px;top:247.7px;width:6.2px;height:6.0px;background:#ffffff;border:0.7px solid #c9c9c9;border-radius:0.9px;"></div>
<div class="a t" style="left:10px;top:256.40px;line-height:12px;font-size:6.6px;color:#3d3d3d;font-weight:400;transform:scaleX(0.971);transform-origin:left center;">Support critical regions only</div>
<div class="a" style="left:98.4px;top:259.8px;width:6.2px;height:6.0px;background:#ffffff;border:0.7px solid #c9c9c9;border-radius:0.9px;"></div>
<div class="a t" style="left:10px;top:268.75px;line-height:12px;font-size:6.6px;color:#3d3d3d;font-weight:400;transform:scaleX(0.927);transform-origin:left center;">Remove small overhangs</div>
<div class="a" style="left:98.4px;top:271.6px;width:6.3px;height:6.4px;background:#0a9a8b;border-radius:0.9px;"></div>
<svg class="a" style="left:98.4px;top:271.6px" width="6.3" height="6.4" viewBox="0 0 6.3 6.4"><path d="M1.5,3.2L2.7,4.5L4.9,2" fill="none" stroke="#ffffff" stroke-width="0.75"/></svg>
<svg class="a" style="left:2px;top:284.9px" width="8" height="7.2" viewBox="0 0 8 7.2"><rect x="0.6" y="0.8" width="5.8" height="4.2" rx="0.8" fill="none" stroke="#6a6a6a" stroke-width="0.6"/><path d="M0.4,6H6.6" stroke="#3a3a3a" stroke-width="0.9"/></svg>
<div class="a t" style="left:11.3px;top:282.50px;line-height:12px;font-size:6.7px;color:#2e2e2e;font-weight:700;transform:scaleX(0.906);transform-origin:left center;">Raft</div>
<div class="a" style="left:26.1px;top:288.5px;width:133.9px;height:0.5px;background:#f2f2f2;"></div>
<div class="a t" style="left:10px;top:295.40px;line-height:12px;font-size:6.6px;color:#3d3d3d;font-weight:400;transform:scaleX(0.942);transform-origin:left center;">Raft layers</div>
<div class="a" style="left:98.6px;top:296.35px;width:47px;height:9.8px;background:#ffffff;border:1px solid #ececec;border-radius:1.2px;"></div>
<svg class="a" style="left:100.3px;top:297.7px" width="3.4" height="7.2" viewBox="0 0 3.4 7.2"><path d="M0.5,2.5Q1.7,0.3 2.9,2.5M0.5,4.7Q1.7,6.9 2.9,4.7" fill="none" stroke="#c4c4c4" stroke-width="0.5"/></svg>
<div class="a t" style="left:107.7px;top:295.40px;line-height:12px;font-size:6.8px;color:#3d3d3d;font-weight:400;transform:scaleX(0.999);">0</div>
<div class="a t" style="right:624px;top:295.60px;line-height:12px;font-size:5.2px;color:#8d8d8d;font-weight:400;transform:scaleX(0.937);transform-origin:right center;">layers</div>
<svg class="a" style="left:2px;top:311.15px" width="8" height="7.2" viewBox="0 0 8 7.2"><path d="M1,0.8H4.6V6.2H1Z" fill="#d9d9d9"/><path d="M2.2,0.8V6.2M3.4,0.8V6.2" stroke="#b5b5b5" stroke-width="0.4"/><path d="M5.2,0.8V6.2" stroke="#9a9a9a" stroke-width="0.6"/></svg>
<div class="a t" style="left:11.3px;top:308.75px;line-height:12px;font-size:6.7px;color:#2e2e2e;font-weight:700;transform:scaleX(0.879);transform-origin:left center;">Filament for Supports</div>
<div class="a" style="left:75.5px;top:314.75px;width:84.5px;height:0.5px;background:#f2f2f2;"></div>
<div class="a t" style="left:10px;top:321.50px;line-height:12px;font-size:6.6px;color:#3d3d3d;font-weight:400;transform:scaleX(0.982);transform-origin:left center;">Support/raft base</div>
<div class="a" style="left:98.6px;top:322.6px;width:47px;height:9.8px;background:#ffffff;border:1px solid #ececec;border-radius:1.2px;"></div>
<div class="a t" style="left:100px;top:321.60px;line-height:12px;font-size:6.8px;color:#3d3d3d;font-weight:400;transform:scaleX(0.928);transform-origin:left center;">Default</div>
<div class="a t" style="left:10px;top:333.40px;line-height:12px;font-size:6.6px;color:#3d3d3d;font-weight:400;transform:scaleX(0.993);transform-origin:left center;">Support/raft interface</div>
<div class="a" style="left:98.6px;top:334.6px;width:47px;height:9.8px;background:#ffffff;border:1px solid #ececec;border-radius:1.2px;"></div>
<div class="a t" style="left:100px;top:333.60px;line-height:12px;font-size:6.8px;color:#3d3d3d;font-weight:400;transform:scaleX(0.928);transform-origin:left center;">Default</div>
<svg class="a" style="left:2px;top:349.59999999999997px" width="8" height="7.2" viewBox="0 0 8 7.2"><circle cx="2.6" cy="2.6" r="1.9" fill="none" stroke="#5a5a5a" stroke-width="0.6"/><circle cx="2.6" cy="2.6" r="0.6" fill="#5a5a5a"/><circle cx="5" cy="4.8" r="1.6" fill="#fff" stroke="#5a5a5a" stroke-width="0.6"/><path d="M0.6,5.2H2.6" stroke="#5a5a5a" stroke-width="0.6"/></svg>
<div class="a t" style="left:11.3px;top:347.20px;line-height:12px;font-size:6.7px;color:#2e2e2e;font-weight:700;transform:scaleX(0.859);transform-origin:left center;">Advanced</div>
<div class="a" style="left:41.8px;top:353.2px;width:118.2px;height:0.5px;background:#f2f2f2;"></div>
<div class="a t" style="left:10px;top:360.00px;line-height:12px;font-size:6.6px;color:#3d3d3d;font-weight:400;transform:scaleX(0.955);transform-origin:left center;">Top Z distance</div>
<div class="a" style="left:98.6px;top:360.70000000000005px;width:47px;height:9.8px;background:#ffffff;border:1px solid #ececec;border-radius:1.2px;"></div>
<div class="a t" style="left:101px;top:360.00px;line-height:12px;font-size:6.8px;color:#3d3d3d;font-weight:400;transform:scaleX(0.846);transform-origin:left center;">0.2</div>
<div class="a t" style="right:626px;top:360.80px;line-height:12px;font-size:4.6px;color:#8d8d8d;font-weight:400;transform:scaleX(1.057);transform-origin:right center;">mm</div>
<div class="a t" style="left:10px;top:372.00px;line-height:12px;font-size:6.6px;color:#3d3d3d;font-weight:400;transform:scaleX(0.963);transform-origin:left center;">Bottom Z distance</div>
<div class="a" style="left:98.6px;top:373.0px;width:47px;height:9.8px;background:#ffffff;border:1px solid #ececec;border-radius:1.2px;"></div>
<div class="a t" style="left:101px;top:372.00px;line-height:12px;font-size:6.8px;color:#3d3d3d;font-weight:400;transform:scaleX(0.846);transform-origin:left center;">0.2</div>
<div class="a t" style="right:626px;top:372.80px;line-height:12px;font-size:4.6px;color:#8d8d8d;font-weight:400;transform:scaleX(1.057);transform-origin:right center;">mm</div>
<div class="a t" style="left:10px;top:383.90px;line-height:12px;font-size:6.6px;color:#3d3d3d;font-weight:400;transform:scaleX(0.941);transform-origin:left center;">Base pattern</div>
<div class="a" style="left:98.6px;top:384.90000000000003px;width:47px;height:9.8px;background:#ffffff;border:1px solid #ececec;border-radius:1.2px;"></div>
<div class="a t" style="left:100px;top:384.00px;line-height:12px;font-size:6.8px;color:#3d3d3d;font-weight:400;transform:scaleX(0.928);transform-origin:left center;">Default</div>
<div class="a t" style="left:10px;top:396.00px;line-height:12px;font-size:6.6px;color:#3d3d3d;font-weight:400;transform:scaleX(0.937);transform-origin:left center;">Base pattern spacing</div>
<div class="a" style="left:98.6px;top:396.90000000000003px;width:47px;height:9.8px;background:#ffffff;border:1px solid #ececec;border-radius:1.2px;"></div>
<div class="a t" style="left:101px;top:396.00px;line-height:12px;font-size:6.8px;color:#3d3d3d;font-weight:400;transform:scaleX(0.846);transform-origin:left center;">2.5</div>
<div class="a t" style="right:626px;top:396.80px;line-height:12px;font-size:4.6px;color:#8d8d8d;font-weight:400;transform:scaleX(1.057);transform-origin:right center;">mm</div>
<div class="a t" style="left:10px;top:407.60px;line-height:12px;font-size:6.6px;color:#3d3d3d;font-weight:400;transform:scaleX(0.930);transform-origin:left center;">Pattern angle</div>
<div class="a" style="left:98.6px;top:408.8px;width:47px;height:9.8px;background:#ffffff;border:1px solid #ececec;border-radius:1.2px;"></div>
<div class="a t" style="left:101px;top:407.70px;line-height:12px;font-size:6.8px;color:#3d3d3d;font-weight:400;transform:scaleX(0.999);">0</div>
<div class="a t" style="left:142.2px;top:406.20px;line-height:12px;font-size:5px;color:#8d8d8d;font-weight:400;transform:scaleX(0.999);">°</div>
<div class="a" style="left:0px;top:412.6px;width:768px;height:19.4px;background:#dfdfe0;"></div>
<div class="a" style="left:0px;top:412.6px;width:768px;height:0.8px;background:#d6d6d7;"></div>
<svg class="a" style="left:7.5px;top:419.5px" width="10" height="5" viewBox="0 0 10 5"><path d="M0.4,1.4H7.6M0.4,3.2H9.2" stroke="#3f78c8" stroke-width="0.7"/><path d="M6.4,3.4L7.2,4.8" stroke="#3f78c8" stroke-width="0.6"/></svg>
<div class="a" style="left:12.4px;top:415px;width:6.2px;height:6.2px;background:#cf2f1f;border-radius:3.1px;"></div>
<div class="a t" style="left:14.6px;top:412.20px;line-height:12px;font-size:3.6px;color:#ffffff;font-weight:700;transform:scaleX(0.999);">1</div>
<div class="a t" style="left:20.4px;top:412.80px;line-height:12px;font-size:4.7px;color:#2a2a2a;font-weight:700;transform:scaleX(0.922);transform-origin:left center;font-style:italic;">49°F</div>
<div class="a t" style="left:20.4px;top:419.70px;line-height:12px;font-size:4.9px;color:#7d7d7d;font-weight:400;transform:scaleX(0.977);transform-origin:left center;">Windy</div>
<div class="a" style="left:246.5px;top:417.5px;width:4.2px;height:4.2px;background:#2f9be6;border-radius:0.4px;"></div>
<div class="a" style="left:251.5px;top:417.5px;width:4.2px;height:4.2px;background:#2a8fe0;border-radius:0.4px;"></div>
<div class="a" style="left:246.5px;top:422.5px;width:4.2px;height:4.2px;background:#1f7fd8;border-radius:0.4px;"></div>
<div class="a" style="left:251.5px;top:422.5px;width:4.2px;height:4.2px;background:#1a72d0;border-radius:0.4px;"></div>
<div class="a" style="left:261.9px;top:416.5px;width:86.7px;height:11.6px;background:#f4f4f5;border-radius:5.8px;"></div>
<svg class="a" style="left:266px;top:419.2px" width="6.4" height="6.4" viewBox="0 0 6.4 6.4"><circle cx="2.6" cy="2.6" r="1.9" fill="none" stroke="#1f6fc6" stroke-width="0.75"/><path d="M4,4L5.7,5.7" stroke="#1f6fc6" stroke-width="0.8"/></svg>
<div class="a t" style="left:275.7px;top:416.40px;line-height:12px;font-size:5.4px;color:#7b7b7b;font-weight:400;transform:scaleX(0.964);transform-origin:left center;">Search</div>
<svg class="a" style="left:329.5px;top:417.2px" width="18" height="10.4" viewBox="0 0 18 10.4"><ellipse cx="9" cy="9.4" rx="8.6" ry="0.9" fill="#6f9a3a"/><ellipse cx="9.4" cy="5" rx="6.6" ry="3.8" fill="#8a5a34"/><ellipse cx="4.2" cy="4.4" rx="3.2" ry="2.9" fill="#9a6a40"/><rect x="4.4" y="7" width="2" height="2.4" fill="#6e4526"/><rect x="11.6" y="7" width="2.2" height="2.4" fill="#6e4526"/><circle cx="2.9" cy="3.9" r="0.45" fill="#2a1a10"/></svg>
<svg class="a" style="left:353.5px;top:418.5px" width="9.6" height="8.4" viewBox="0 0 9.6 8.4"><rect x="0" y="0" width="8.2" height="7" rx="0.8" fill="#f6f6f6"/><path d="M0,0.8Q0,0 0.8,0H3.4V4.2H8.2V6.2Q8.2,7 7.4,7H0.8Q0,7 0,6.2Z" fill="#1c1c1c"/></svg>
<svg class="a" style="left:371.6px;top:417.8px" width="9.6" height="9.6" viewBox="0 0 9.6 9.6"><path d="M4.8,0.3A4.4,4.2 0 1 1 2.6,8.2L0.6,9L1.2,7A4.4,4.2 0 0 1 4.8,0.3Z" fill="#6b5fd3"/><rect x="2.3" y="3" width="3.5" height="2.9" rx="0.6" fill="#ffffff"/><path d="M5.9,4.1L7.4,3.1V5.8L5.9,4.8Z" fill="#ffffff"/></svg>
<svg class="a" style="left:388.4px;top:418px" width="11" height="9.2" viewBox="0 0 11 9.2"><path d="M0.4,0.8Q0.4,0.3 0.9,0.3H4L5,1.4H10Q10.6,1.4 10.6,2V3H0.4Z" fill="#f2b21a"/><rect x="0.4" y="2.2" width="10.2" height="6.6" rx="0.6" fill="#fbd140"/><path d="M0.4,6.6H10.6V8.2Q10.6,8.8 10,8.8H1Q0.4,8.8 0.4,8.2Z" fill="#2f8be0"/><rect x="3.6" y="5.8" width="3.8" height="1.4" fill="#1c62b8"/></svg>
<div class="a" style="left:392.6px;top:429.4px;width:2.8px;height:0.8px;background:#6a6a6a;border-radius:0.4px;"></div>
<svg class="a" style="left:406.6px;top:417.8px" width="9.6" height="9.6" viewBox="0 0 9.6 9.6"><circle cx="4.8" cy="4.8" r="4.6" fill="#1b86d6"/><path d="M0.4,5.4A4.6,4.6 0 0 1 9.3,3.8Q7.6,1.6 4.8,2.2Q2,2.8 0.4,5.4Z" fill="#35c486"/><path d="M3.6,6.2A2.2,2.2 0 0 1 7.4,4.4Q5.6,4.2 5.4,5.8Q5.4,7.6 7.8,7.6Q5,9 3.6,6.2Z" fill="#f3f9ff"/></svg>
<svg class="a" style="left:423.8px;top:417.6px" width="10" height="9.8" viewBox="0 0 10 9.8"><path d="M3,2.2V1.4Q3,0.4 4,0.4H6Q7,0.4 7,1.4V2.2" fill="none" stroke="#1b5fae" stroke-width="0.7"/><rect x="0.3" y="2" width="9.4" height="7.4" rx="0.9" fill="#1766bd"/><rect x="3" y="3.6" width="1.8" height="1.8" fill="#f25022"/><rect x="5.2" y="3.6" width="1.8" height="1.8" fill="#7fba00"/><rect x="3" y="5.8" width="1.8" height="1.8" fill="#00a4ef"/><rect x="5.2" y="5.8" width="1.8" height="1.8" fill="#ffb900"/></svg>
<svg class="a" style="left:442.6px;top:418.4px" width="8.6" height="8.6" viewBox="0 0 8.6 8.6"><circle cx="4.2" cy="4.2" r="4" fill="#1f8fe0"/><path d="M1.8,5.4L4,3.4L4.8,4.4L6.6,2.6L5.4,5.2L4.4,4.6Z" fill="#ffffff"/></svg>
<svg class="a" style="left:459.3px;top:417.4px" width="9.6" height="9.6" viewBox="0 0 9.6 9.6"><circle cx="4.7" cy="4.7" r="4.6" fill="#e8453c"/><path d="M4.7,4.7L0.72,7A4.6,4.6 0 0 0 4.7,9.3L8.7,2.4Z" fill="#35a853"/><path d="M4.7,4.7L8.68,2.4A4.6,4.6 0 0 1 4.7,9.3Z" fill="#fbc116"/><path d="M4.7,4.7L0.72,7A4.6,4.6 0 0 1 0.72,2.4Z" fill="#35a853"/><circle cx="4.7" cy="4.7" r="2.1" fill="#ffffff"/><circle cx="4.7" cy="4.7" r="1.6" fill="#4a8af4"/></svg>
<div class="a" style="left:462.9px;top:429.4px;width:2.4px;height:0.8px;background:#8a8a8a;border-radius:0.4px;"></div>
<div class="a" style="left:474.3px;top:414.6px;width:15.3px;height:16.6px;background:#eeeeef;border-radius:1.5px;"></div>
<svg class="a" style="left:477.8px;top:417.8px" width="8.4" height="9.4" viewBox="0 0 8.4 9.4"><path d="M1.4,0.4H6.6V3.2L4.6,4.4L6.8,5.6V7.2L3.4,9L1.8,8V5.4L3.6,4.4L1.4,3.2Z" fill="#151515"/><path d="M4.2,5.4L6.4,6.4V7.2L4.2,8.2Z" fill="#12a07c"/><path d="M2.4,1.4H4V3L2.4,2.4Z" fill="#12a07c" opacity="0.6"/></svg>
<div class="a" style="left:478.6px;top:429.3px;width:6.6px;height:0.9px;background:#2a7bd8;border-radius:0.45px;"></div>
<svg class="a" style="left:495.3px;top:417.4px" width="9.2" height="9.8" viewBox="0 0 9.2 9.8"><rect x="0.2" y="0.2" width="8.8" height="9.4" rx="1.2" fill="#ee7a14"/><rect x="0.2" y="6.6" width="8.8" height="3" rx="1" fill="#9c4a08"/><path d="M3,1.4H6.2V2.6H4.3V3.6H5.8V4.8H4.3V6.4H3Z" fill="#ffffff"/></svg>
<div class="a" style="left:498.6px;top:429.4px;width:2.4px;height:0.8px;background:#8a8a8a;border-radius:0.4px;"></div>
<div class="a" style="left:509.7px;top:414.6px;width:14.9px;height:16.6px;background:#f5e3e4;border-radius:1.5px;"></div>
<svg class="a" style="left:512.6px;top:418.6px" width="9" height="7.6" viewBox="0 0 9 7.6"><rect x="0.4" y="0.4" width="8" height="3.6" rx="0.8" fill="#8fb98c" stroke="#5f8f64" stroke-width="0.5"/><rect x="1.2" y="4.6" width="6.4" height="1.4" fill="#9aa39a"/><path d="M2.4,2.2H6.4" stroke="#eef5ee" stroke-width="0.7"/><path d="M1.4,6.8H7.4" stroke="#7d857d" stroke-width="0.5"/></svg>
<div class="a" style="left:515.8px;top:429.3px;width:2.6px;height:0.9px;background:#d23a3a;border-radius:0.45px;"></div>
<svg class="a" style="left:668.4px;top:420.8px" width="5" height="3.4" viewBox="0 0 5 3.4"><path d="M0.5,2.7L2.4,0.7L4.3,2.7" fill="none" stroke="#3a3a3a" stroke-width="0.6"/></svg>
<svg class="a" style="left:679.6px;top:419px" width="8.4" height="7.4" viewBox="0 0 8.4 7.4"><path d="M1.8,5.2Q0.4,5.2 0.4,3.9Q0.4,2.7 1.7,2.6Q2.2,0.9 3.9,0.9Q5.4,0.9 5.9,2.3Q7.3,2.4 7.3,3.8Q7.3,5.2 5.9,5.2Z" fill="none" stroke="#4a4a4a" stroke-width="0.6"/><circle cx="6" cy="5.3" r="1.7" fill="#d8352a"/></svg>
<svg class="a" style="left:692.6px;top:419.2px" width="8" height="6.8" viewBox="0 0 8 6.8"><path d="M0.5,2.4Q4,-0.8 7.5,2.4L4,6.2Z" fill="#8f8f8f"/><path d="M2,3.9Q4,2.2 6,3.9L4,6.2Z" fill="#5a5a5a"/></svg>
<svg class="a" style="left:702.6px;top:419.4px" width="7.4" height="6.4" viewBox="0 0 7.4 6.4"><path d="M0.4,2.2H1.6L3.2,0.8V5.6L1.6,4.2H0.4Z" fill="none" stroke="#4a4a4a" stroke-width="0.55"/><path d="M4.2,2.2Q4.9,3.2 4.2,4.2M5.2,1.4Q6.5,3.2 5.2,5" fill="none" stroke="#6a6a6a" stroke-width="0.5"/></svg>
<svg class="a" style="left:711.8px;top:419.6px" width="8" height="5.6" viewBox="0 0 8 5.6"><rect x="0.4" y="1" width="6.2" height="3.6" rx="0.7" fill="#1a1a1a"/><rect x="6.7" y="2.1" width="0.8" height="1.4" fill="#1a1a1a"/><path d="M1.4,1L2.4,0.2L3,1" fill="#1a1a1a"/></svg>
<div class="a t" style="right:17.600000000000023px;top:413.10px;line-height:12px;font-size:4.5px;color:#1f1f1f;font-weight:400;transform:scaleX(1.014);transform-origin:right center;">5:28 PM</div>
<div class="a t" style="right:17.600000000000023px;top:419.20px;line-height:12px;font-size:4.5px;color:#1f1f1f;font-weight:400;transform:scaleX(1.066);transform-origin:right center;">10/30/2023</div>
<svg class="a" style="left:754px;top:418.8px" width="6.4" height="7.6" viewBox="0 0 6.4 7.6"><path d="M3.1,0.5Q5.1,0.5 5.1,2.8V4.4L5.9,5.6H0.3L1.1,4.4V2.8Q1.1,0.5 3.1,0.5Z" fill="#1d5fb8"/><path d="M2.3,6.2Q3.1,7.2 3.9,6.2Z" fill="#1d5fb8"/></svg>
</body></html>
